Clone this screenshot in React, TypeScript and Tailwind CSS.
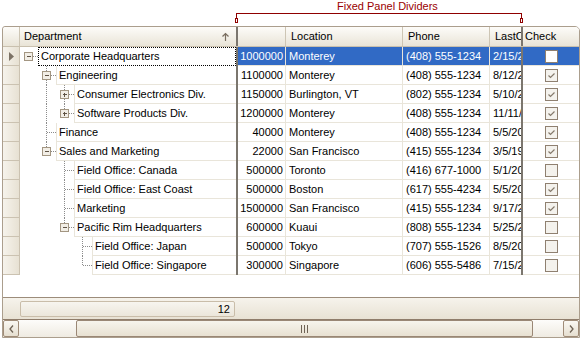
import React from 'react'

type Row = {
  name: string
  level: number
  node: 'minus' | 'plus' | 'leaf'
  budget: string
  location: string
  phone: string
  date: string
  check: boolean
  down: boolean
  through: number[]
}

const rows: Row[] = [
  { name: 'Corporate Headquarters', level: 0, node: 'minus', budget: '1000000', location: 'Monterey', phone: '(408) 555-1234', date: '2/15/2001', check: false, down: false, through: [] },
  { name: 'Engineering', level: 1, node: 'minus', budget: '1100000', location: 'Monterey', phone: '(408) 555-1234', date: '8/12/2001', check: true, down: true, through: [] },
  { name: 'Consumer Electronics Div.', level: 2, node: 'plus', budget: '1150000', location: 'Burlington, VT', phone: '(802) 555-1234', date: '5/10/2001', check: true, down: true, through: [1] },
  { name: 'Software Products Div.', level: 2, node: 'plus', budget: '1200000', location: 'Monterey', phone: '(408) 555-1234', date: '11/11/2001', check: true, down: false, through: [1] },
  { name: 'Finance', level: 1, node: 'leaf', budget: '40000', location: 'Monterey', phone: '(408) 555-1234', date: '5/5/2001', check: true, down: true, through: [] },
  { name: 'Sales and Marketing', level: 1, node: 'minus', budget: '22000', location: 'San Francisco', phone: '(415) 555-1234', date: '3/5/1999', check: true, down: false, through: [] },
  { name: 'Field Office: Canada', level: 2, node: 'leaf', budget: '500000', location: 'Toronto', phone: '(416) 677-1000', date: '5/1/2001', check: false, down: true, through: [] },
  { name: 'Field Office: East Coast', level: 2, node: 'leaf', budget: '500000', location: 'Boston', phone: '(617) 555-4234', date: '5/5/2001', check: true, down: true, through: [] },
  { name: 'Marketing', level: 2, node: 'leaf', budget: '1500000', location: 'San Francisco', phone: '(415) 555-1234', date: '9/17/2001', check: true, down: true, through: [] },
  { name: 'Pacific Rim Headquarters', level: 2, node: 'minus', budget: '600000', location: 'Kuaui', phone: '(808) 555-1234', date: '5/25/2001', check: false, down: false, through: [] },
  { name: 'Field Office: Japan', level: 3, node: 'leaf', budget: '500000', location: 'Tokyo', phone: '(707) 555-1526', date: '8/5/2001', check: false, down: true, through: [] },
  { name: 'Field Office: Singapore', level: 3, node: 'leaf', budget: '300000', location: 'Singapore', phone: '(606) 555-5486', date: '7/15/2001', check: false, down: false, through: [] },
]

const centerX = (l: number) => 8 + 18 * l
const cellX = (l: number) => 18 + 18 * l

function TreeLines({ row }: { row: Row }) {
  const w = cellX(row.level)
  const c = centerX(row.level)
  return (
    <svg width={w} height={19} className="shrink-0" shapeRendering="crispEdges">
      <g stroke="#8c8c8c" strokeDasharray="1 1">
        {row.through.map(l => (
          <line key={l} x1={centerX(l) + 0.5} y1={0} x2={centerX(l) + 0.5} y2={19} />
        ))}
        {row.level > 0 && <line x1={c + 0.5} y1={0} x2={c + 0.5} y2={row.down ? 19 : 10} />}
        <line x1={c + 1} y1={9.5} x2={w} y2={9.5} />
      </g>
      {row.node !== 'leaf' && (
        <g>
          <rect x={c - 3.5} y={5.5} width={8} height={8} fill="#f2eee6" stroke="#a39682" />
          <line x1={c - 1} y1={9.5} x2={c + 3} y2={9.5} stroke="#5e5244" />
          {row.node === 'plus' && <line x1={c + 0.5} y1={7.5} x2={c + 0.5} y2={11.5} stroke="#5e5244" />}
        </g>
      )}
    </svg>
  )
}

function CheckBox({ checked, selected }: { checked: boolean; selected: boolean }) {
  return (
    <svg width={13} height={13} shapeRendering="crispEdges">
      <rect x={0.5} y={0.5} width={12} height={12} fill={selected ? '#ffffff' : '#f4f2ed'} stroke="#8f8070" />
      {checked && (
        <path d="M3.5 6.5 L5.5 8.5 L9.5 4.5" fill="none" stroke="#857a6c" strokeWidth={1.2} shapeRendering="auto" />
      )}
    </svg>
  )
}

const headCell = 'h-full flex items-center border-r border-[#cdc5b4] bg-gradient-to-b from-[#fdfcf9] to-[#e9e4d7]'
const line = 'border-[#e9e5da]'

export default function App() {
  return (
    <div className="w-[582px] h-[339px] bg-white overflow-hidden font-['Liberation_Sans',Arial,sans-serif] text-[11px] text-black">
      {/* callout above the grid */}
      <div className="relative h-[26px]">
        <svg className="absolute left-0 top-0" width={582} height={26} shapeRendering="crispEdges">
          <polyline points="236.5,19 236.5,13.5 521.5,13.5 521.5,19" fill="none" stroke="#8f0000" />
          <rect x={235.5} y={18.5} width={2} height={4} fill="none" stroke="#8f0000" />
          <rect x={520.5} y={18.5} width={2} height={4} fill="none" stroke="#8f0000" />
        </svg>
        <span className="absolute left-[337px] top-0 leading-[13px] text-[#9a0000]">Fixed Panel Dividers</span>
      </div>

      {/* grid */}
      <div className="ml-[2px] w-[578px] h-[312px] border border-[#ab9e8d] rounded-tl-[3px] rounded-tr-[5px] flex flex-col overflow-hidden">
        {/* header */}
        <div className="h-[20px] flex shrink-0 border-b border-[#c9c0ae]">
          <div className={`${headCell} w-[17px] rounded-tl-[3px]`} />
          <div className={`${headCell} w-[216px] pl-[4px] justify-between border-r-0`}>
            <span>Department</span>
            <svg width={9} height={9} className="mr-[6px]" shapeRendering="crispEdges">
              <path d="M4.5 1 V9 M1.5 4.5 L4.5 1.5 L7.5 4.5" fill="none" stroke="#7a6e60" strokeWidth={1.2} shapeRendering="auto" />
            </svg>
          </div>
          <div className="w-[2px] h-full bg-[#7b766e]" />
          <div className={`${headCell} w-[48px]`} />
          <div className={`${headCell} w-[117px] pl-[5px]`}>Location</div>
          <div className={`${headCell} w-[87px] pl-[5px]`}>Phone</div>
          <div className={`${headCell} w-[31px] pl-[5px] border-r-0 overflow-hidden whitespace-nowrap`}>LastOrder</div>
          <div className="w-[2px] h-full bg-[#7b766e]" />
          <div className={`${headCell} w-[56px] pl-[2px] border-r-0`}>Check</div>
        </div>

        {/* rows */}
        {rows.map((row, i) => {
          const sel = i === 0
          const selCls = sel ? 'bg-[#316ac5] text-white' : ''
          return (
            <div key={row.name} className="h-[19px] flex shrink-0">
              <div className="w-[17px] h-full flex items-center justify-center border-r border-b border-[#cbc2b1] bg-gradient-to-r from-[#f6f3ec] to-[#e7e1d3]">
                {sel && (
                  <svg width={5} height={9}>
                    <path d="M0 0 L5 4.5 L0 9 Z" fill="#7c7265" />
                  </svg>
                )}
              </div>
              <div className="w-[216px] h-full flex">
                <TreeLines row={row} />
                <div
                  className={`flex-1 h-full flex items-center pl-[2px] whitespace-nowrap ${
                    sel ? 'border border-dotted border-black' : `border-l border-b ${line}`
                  }`}
                >
                  {row.name}
                </div>
              </div>
              <div className="w-[2px] h-full bg-[#7b766e]" />
              <div className={`w-[48px] h-full flex items-center justify-end pr-[2px] border-r border-b ${line} ${selCls}`}>
                {row.budget}
              </div>
              <div className={`w-[117px] h-full flex items-center pl-[3px] border-r border-b ${line} ${selCls}`}>
                {row.location}
              </div>
              <div className={`w-[87px] h-full flex items-center pl-[3px] border-r border-b ${line} ${selCls}`}>
                {row.phone}
              </div>
              <div className={`w-[31px] h-full flex items-center pl-[3px] border-b overflow-hidden whitespace-nowrap ${line} ${selCls}`}>
                {row.date}
              </div>
              <div className="w-[2px] h-full bg-[#7b766e]" />
              <div className={`w-[56px] h-full flex items-center justify-center border-b ${line} ${selCls}`}>
                <CheckBox checked={row.check} selected={sel} />
              </div>
            </div>
          )
        })}

        <div className="flex-1 bg-white" />

        {/* footer */}
        <div className="h-[22px] shrink-0 border-t border-[#9c8c7a] bg-gradient-to-b from-[#f6f3ec] to-[#e8e2d4] pl-[17px] pt-[3px]">
          <div className="w-[215px] h-[16px] border border-[#c9bda9] rounded-[2px] bg-gradient-to-b from-[#f7f5ef] to-[#ebe6da] flex items-center justify-end pr-[4px]">
            12
          </div>
        </div>

        {/* horizontal scrollbar */}
        <div className="h-[18px] shrink-0 flex border-t border-[#8f7d6b] bg-gradient-to-b from-[#fdfcfa] to-[#efebe2]">
          <div className="w-[16px] h-full border border-[#a08c78] rounded-[2px] bg-gradient-to-b from-[#faf8f3] to-[#e6dfd0] flex items-center justify-center">
            <svg width={5} height={8}>
              <path d="M4 0.5 L1 4 L4 7.5" fill="none" stroke="#6f6355" strokeWidth={1.3} />
            </svg>
          </div>
          <div className="ml-[57px] w-[457px] h-full border border-[#9a8775] rounded-[2px] bg-gradient-to-b from-[#f7f4ec] to-[#e8e1d2] flex items-center justify-center">
            <svg width={7} height={8} shapeRendering="crispEdges">
              <path d="M0.5 0 V8 M3.5 0 V8 M6.5 0 V8" stroke="#6f6355" />
            </svg>
          </div>
          <div className="flex-1" />
          <div className="w-[16px] h-full border border-[#a08c78] rounded-[2px] bg-gradient-to-b from-[#faf8f3] to-[#e6dfd0] flex items-center justify-center">
            <svg width={5} height={8}>
              <path d="M1 0.5 L4 4 L1 7.5" fill="none" stroke="#6f6355" strokeWidth={1.3} />
            </svg>
          </div>
        </div>
      </div>
    </div>
  )
}
